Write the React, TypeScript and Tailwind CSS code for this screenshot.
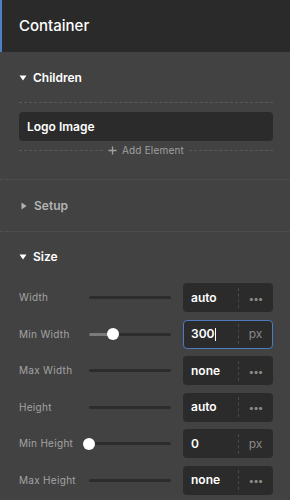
import React from 'react';

type Row = {
  label: string;
  value: string;
  unit?: string;
  thumb?: number;
  focused?: boolean;
};

const ROWS: Row[] = [
  { label: 'Width', value: 'auto' },
  { label: 'Min Width', value: '300', unit: 'px', thumb: 24, focused: true },
  { label: 'Max Width', value: 'none' },
  { label: 'Height', value: 'auto' },
  { label: 'Min Height', value: '0', unit: 'px', thumb: 0 },
  { label: 'Max Height', value: 'none' },
];

const Caret = ({ open, dim }: { open?: boolean; dim?: boolean }) => (
  <svg width="8" height="8" viewBox="0 0 8 8" className={open ? '' : 'ml-[1px]'}>
    {open ? (
      <path d="M0.5 1.5 L7.5 1.5 L4 6.5 Z" fill={dim ? '#b4b4b4' : '#ffffff'} />
    ) : (
      <path d="M1.5 0.5 L6.5 4 L1.5 7.5 Z" fill={dim ? '#b4b4b4' : '#ffffff'} />
    )}
  </svg>
);

const SectionHead = ({ title, open }: { title: string; open?: boolean }) => (
  <div className="flex items-center gap-[6px] h-[16px]">
    <Caret open={open} dim={!open} />
    <span className={`text-[12px] font-semibold ${open ? 'text-white' : 'text-[#b4b4b4]'}`}>{title}</span>
  </div>
);

const Slider = ({ thumb }: { thumb?: number }) => (
  <div className="relative w-[82px] h-[3px] rounded-full bg-[#2c2c2c]">
    {thumb !== undefined && (
      <>
        <div className="absolute left-0 top-0 h-[3px] rounded-full bg-[#7a7a7a]" style={{ width: thumb }} />
        <div
          className="absolute top-[-4.5px] w-[12px] h-[12px] rounded-full bg-white"
          style={{ left: thumb - 6 }}
        />
      </>
    )}
  </div>
);

const ValueBox = ({ row }: { row: Row }) => (
  <div
    className={`flex items-center w-[90px] h-[29px] rounded-[4px] bg-[#2b2b2b] ${
      row.focused ? 'border border-[#4d7cc0]' : 'border border-transparent'
    }`}
  >
    <div className="flex-1 flex items-center pl-[7px] text-[12px] font-semibold text-white">
      {row.value}
      {row.focused && <span className="ml-[1px] w-[1px] h-[13px] bg-white" />}
    </div>
    <div className="h-[20px] border-l border-dashed border-[#4a4a4a]" />
    <div className="w-[33px] flex items-center justify-center">
      {row.unit ? (
        <span className="text-[12px] text-[#8a8a8a]">{row.unit}</span>
      ) : (
        <span className="text-[10px] leading-none tracking-[-1px] text-[#8a8a8a]">•••</span>
      )}
    </div>
  </div>
);

export default function App() {
  return (
    <div
      className="w-[290px] h-[500px] overflow-hidden bg-[#424242] flex flex-col"
      style={{ fontFamily: 'Inter, "Noto Sans", sans-serif' }}
    >
      {/* Header */}
      <div className="h-[52px] shrink-0 flex items-center pl-[17px] bg-[#2a2a2a] border-l-2 border-[#4f7fc4]">
        <span className="text-[15px] font-medium text-white">Container</span>
      </div>

      {/* Children */}
      <div className="pl-[19px] pr-[17px] pt-[18px] h-[127px] shrink-0">
        <SectionHead title="Children" open />
        <div className="mt-[16px] border-t border-dashed border-[#5a5a5a]" />
        <div className="mt-[9px] h-[29px] rounded-[4px] bg-[#2b2b2b] flex items-center pl-[8px]">
          <span className="text-[12px] font-semibold text-white">Logo Image</span>
        </div>
        <div className="flex items-center h-[18px] gap-[5px]">
          <div className="flex-1 border-t border-dashed border-[#5a5a5a]" />
          <svg width="9" height="9" viewBox="0 0 9 9">
            <path d="M4.5 0.5 V8.5 M0.5 4.5 H8.5" stroke="#a0a0a0" strokeWidth="1.3" />
          </svg>
          <span className="text-[10px] text-[#a0a0a0] tracking-[0.2px]">Add Element</span>
          <div className="flex-1 border-t border-dashed border-[#5a5a5a]" />
        </div>
      </div>

      <div className="border-t border-dotted border-[#565656]" />

      {/* Setup */}
      <div className="h-[51px] shrink-0 pl-[19px] pr-[17px] flex items-center">
        <SectionHead title="Setup" />
      </div>

      <div className="border-t border-dotted border-[#565656]" />

      {/* Size */}
      <div className="pl-[19px] pr-[17px] pt-[17px]">
        <SectionHead title="Size" open />
        <div className="mt-[18px] flex flex-col gap-[7.5px]">
          {ROWS.map((row) => (
            <div key={row.label} className="flex items-center h-[29px]">
              <span className="w-[70px] text-[10px] tracking-[0.3px] text-[#a2a2a2]">{row.label}</span>
              <Slider thumb={row.thumb} />
              <div className="ml-auto">
                <ValueBox row={row} />
              </div>
            </div>
          ))}
        </div>
      </div>
    </div>
  );
}
